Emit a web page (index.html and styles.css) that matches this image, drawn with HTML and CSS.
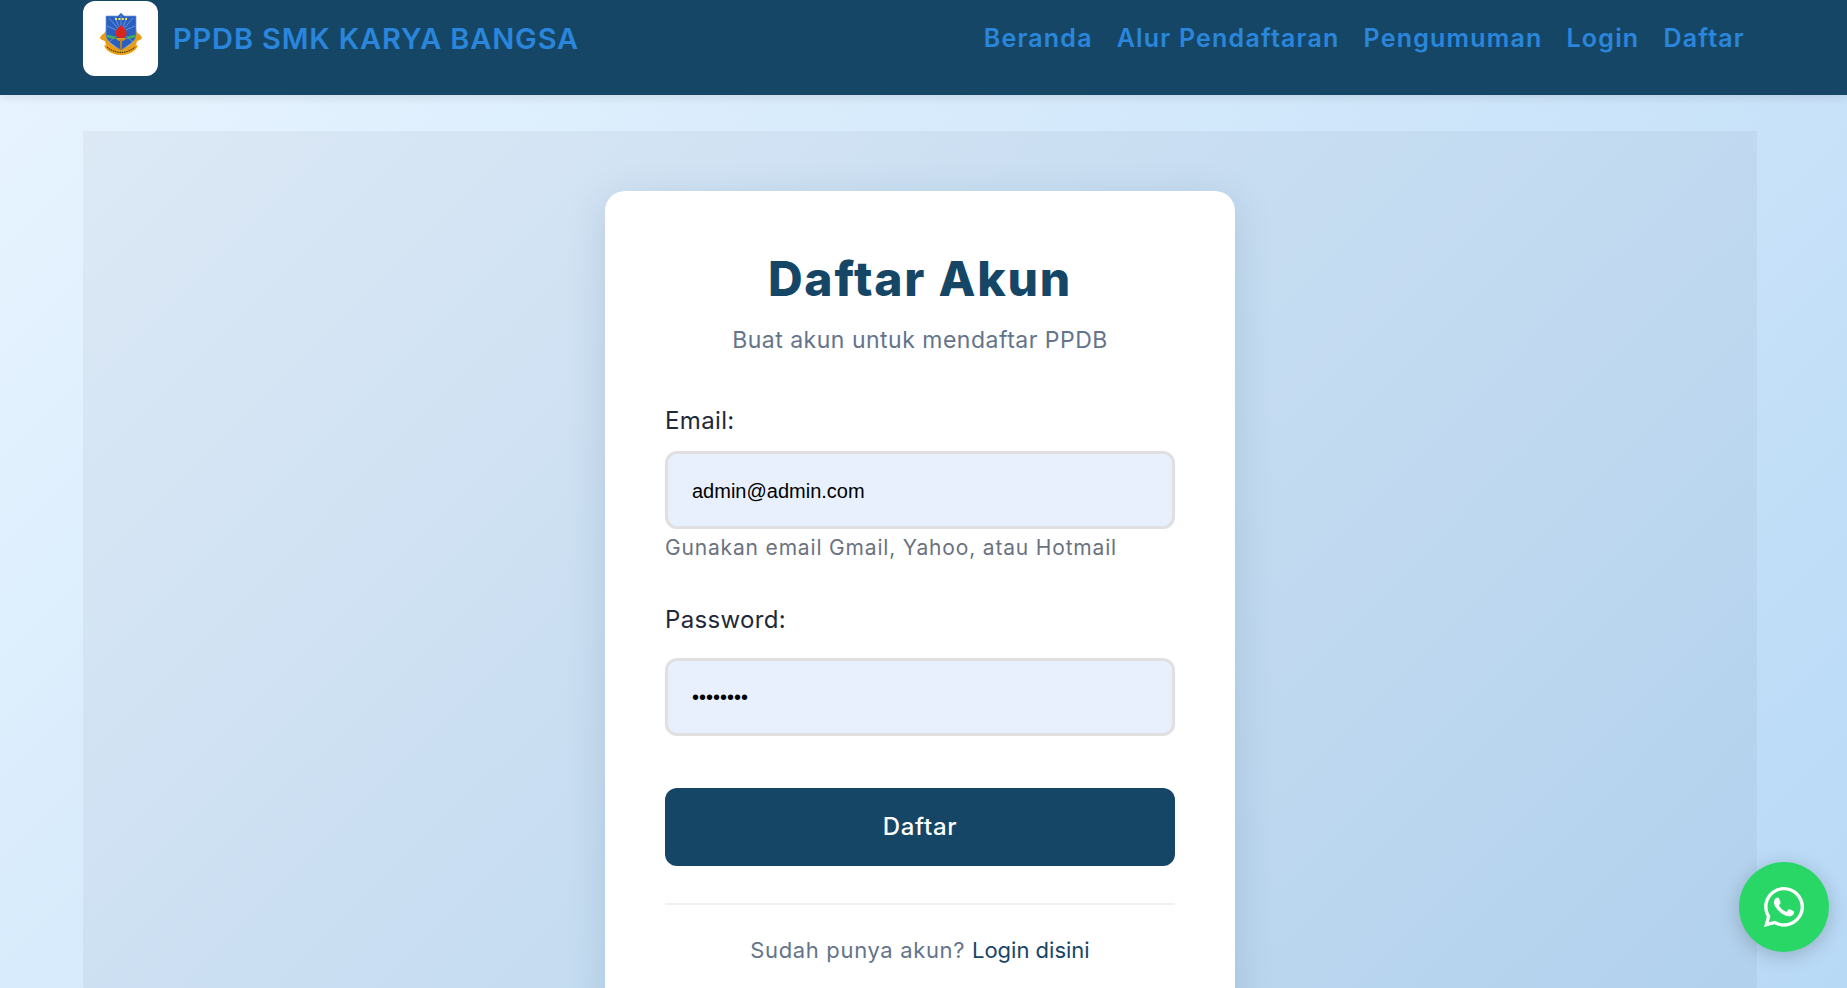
FILE: index.html
```html
<!DOCTYPE html>
<html lang="id">
<head>
<meta charset="utf-8">
<title>PPDB SMK Karya Bangsa</title>
<link rel="stylesheet" href="styles.css">
</head>
<body>
<header class="navbar">
  <div class="navbar-inner">
    <a class="brand" href="#">
      <span class="logo">
        <svg class="logo-art" viewBox="0 0 42 42" aria-hidden="true">
          <defs><filter id="soft" x="-5%" y="-5%" width="110%" height="110%"><feGaussianBlur stdDeviation=".35"/></filter></defs>
          <g filter="url(#soft)">
            <path d="M6 15c0 3-1 5-3 6-1 1-3 2-3 4 1 2 3 2 5 3 1 7 7 14 16 14s15-7 16-14c2-1 4-1 5-3 0-2-2-3-3-4-2-1-3-3-3-6-2 1-3 3-3 6v7c-2 4-7 7-12 7s-10-3-12-7v-7c0-3-1-5-3-6z" fill="#e89c12"/>
            <path d="M7 31c3 4 9 7 14 7s11-3 14-7l3 2c-3 6-10 9-17 9S7 39 4 33z" fill="#eda51a"/>
            <path d="M6 3h12l3-3 3 3h12v19c0 6-7 10-15 15C13 32 6 28 6 22z" fill="#2a5ec0" stroke="#6f9ae0" stroke-width=".7"/>
            <path d="M21 19 9 5M21 19 15 4M21 19 21 2M21 19 27 4M21 19 33 5M21 19 7 13M21 19 35 13M21 19 9 29M21 19 33 29" stroke="#7fabea" stroke-width=".7"/>
            <path d="M15 6h12" stroke="#f6ec5c" stroke-width="2.200" stroke-dasharray="2 1.400"/>
            <path d="M7 23l8 2M27 25l8-2" stroke="#44b24c" stroke-width="2.400"/>
            <path d="M15 25h12l-4 3h-4z" fill="#d99a1c"/>
            <path d="M21 12c3 3 5.500 5 5.500 8.500 0 3-2.500 4.500-5.500 4.500s-5.500-1.500-5.500-4.500c0-3.500 2.500-5.500 5.500-8.500z" fill="#d8261c"/>
            <path d="M20 27h2l-.4 10h-1.200z" fill="#d99a1c" stroke="#8a6410" stroke-width=".4"/>
            <path d="M7 34c3 3 9 5.500 14 5.500s11-2.500 14-5.500" fill="none" stroke="#4a3a10" stroke-width="1.300" stroke-dasharray="1.500 .8"/>
          </g>
        </svg>
      </span>
      <span class="brand-name">PPDB SMK KARYA BANGSA</span>
    </a>
    <nav class="nav-links">
      <a href="#">Beranda</a>
      <a href="#">Alur Pendaftaran</a>
      <a href="#">Pengumuman</a>
      <a href="#">Login</a>
      <a href="#">Daftar</a>
    </nav>
  </div>
</header>

<main class="panel">
  <section class="card">
    <h1 class="card-title">Daftar Akun</h1>
    <p class="card-subtitle">Buat akun untuk mendaftar PPDB</p>
    <form class="form">
      <div class="field">
        <label class="field-label" for="email">Email:</label>
        <input class="field-input" id="email" type="email" value="admin@admin.com">
        <small class="field-hint">Gunakan email Gmail, Yahoo, atau Hotmail</small>
      </div>
      <div class="field field-password">
        <label class="field-label" for="password">Password:</label>
        <input class="field-input" id="password" type="password" value="admin123">
      </div>
      <button class="submit" type="button">Daftar</button>
    </form>
    <p class="card-footer">Sudah punya akun? <a href="#">Login disini</a></p>
  </section>
</main>

<a class="whatsapp" href="#" aria-label="WhatsApp">
  <svg viewBox="0 0 448 512" aria-hidden="true"><path fill="currentColor" d="M380.900 97.100C339 55.100 283.200 32 223.900 32c-122.400 0-222 99.600-222 222 0 39.100 10.200 77.300 29.600 111L0 480l117.700-30.900c32.400 17.700 68.900 27 106.100 27h.1c122.300 0 224.100-99.600 224.100-222 0-59.300-25.200-115-67.100-157zm-157 341.600c-33.200 0-65.700-8.900-94-25.700l-6.700-4-69.800 18.300L72 359.200l-4.400-7c-18.500-29.400-28.200-63.300-28.200-98.200 0-101.700 82.800-184.500 184.600-184.500 49.300 0 95.600 19.200 130.400 54.100 34.800 34.900 56.200 81.200 56.100 130.500 0 101.800-84.900 184.600-186.600 184.600zm101.200-138.200c-5.500-2.800-32.800-16.200-37.900-18-5.100-1.900-8.800-2.800-12.500 2.800-3.700 5.600-14.300 18-17.600 21.800-3.200 3.700-6.500 4.200-12 1.400-32.600-16.300-54-29.100-75.500-66-5.700-9.800 5.700-9.100 16.300-30.300 1.800-3.700.9-6.900-.5-9.700-1.400-2.800-12.500-30.100-17.100-41.200-4.500-10.800-9.100-9.300-12.500-9.500-3.200-.2-6.900-.2-10.600-.2-3.700 0-9.700 1.400-14.800 6.900-5.100 5.600-19.400 19-19.400 46.300 0 27.300 19.900 53.700 22.600 57.400 2.800 3.700 39.100 59.700 94.800 83.800 35.200 15.200 49 16.500 66.600 13.900 10.700-1.600 32.800-13.400 37.400-26.400 4.600-13 4.600-24.100 3.200-26.400-1.300-2.500-5-3.900-10.500-6.600z"/></svg>
</a>
</body>
</html>
```
FILE: styles.css
```css
* { box-sizing: border-box; }

html, body { height: 988px; overflow: hidden; }

body {
  margin: 0;
  font-family: Inter, "Noto Sans", sans-serif;
  background: linear-gradient(135deg, #e9f5ff 0%, #b8d9f6 100%);
  color: #1e293b;
}

a { text-decoration: none; color: inherit; }

.navbar {
  height: 95px;
  background: #164666;
  box-shadow: 0 2px 10px rgba(0, 0, 0, .1);
  position: relative;
}

.navbar-inner {
  width: 1674px;
  margin-left: 83px;
  padding-top: 1px;
  display: flex;
  justify-content: space-between;
  align-items: center;
}

.brand { display: flex; align-items: center; gap: 15px; }

.logo {
  width: 75px;
  height: 75px;
  border-radius: 12px;
  background: #fff;
  display: flex;
  align-items: center;
  justify-content: center;
}

.logo-art { width: 42px; height: 42px; margin-bottom: 9px; }

.brand-name {
  font-size: 29px;
  font-weight: 600;
  letter-spacing: .85px;
  color: #2a86dc;
}

.nav-links { display: flex; padding-bottom: 2px; }

.nav-links a {
  padding: 0 12px;
  font-size: 25px;
  font-weight: 600;
  letter-spacing: 1.200px;
  color: #2a86dc;
}

.panel {
  width: 1674px;
  height: 857px;
  margin: 36px 0 0 83px;
  background: rgba(0, 10, 20, .04);
  display: flex;
  justify-content: center;
  padding-top: 60px;
}

.card {
  width: 630px;
  height: 860px;
  padding: 60px;
  background: #fff;
  border-radius: 20px;
  box-shadow: 0 10px 40px rgba(22, 70, 102, .15);
}

.card-title {
  margin: 0;
  height: 56px;
  line-height: 56px;
  font-size: 48px;
  font-weight: 800;
  letter-spacing: 1.800px;
  text-align: center;
  color: #164666;
}

.card-subtitle {
  margin: 17px 0 0;
  padding-top: 1px;
  line-height: 31px;
  font-size: 23px;
  letter-spacing: .5px;
  text-align: center;
  color: #64748b;
}

.form { margin-top: 48px; }

.field-label {
  display: block;
  padding-top: 1px;
  line-height: 31px;
  font-size: 24px;
  letter-spacing: .35px;
  color: #1e293b;
}

.field-input {
  display: block;
  width: 100%;
  height: 78px;
  margin-top: 15px;
  padding: 2px 24px 0;
  border: 3px solid #e0e0e0;
  border-radius: 12px;
  background: #e8f0fe;
  color: #000;
  font-family: "Liberation Sans", Arial, sans-serif;
  font-size: 20px;
  outline: none;
}

.field-hint {
  display: block;
  margin-top: 5px;
  line-height: 28px;
  font-size: 21px;
  letter-spacing: .83px;
  color: #6b7280;
}

.field-password { margin-top: 41px; }

.field-password .field-input { margin-top: 23px; padding-top: 0; }

.submit {
  display: block;
  width: 100%;
  height: 78px;
  margin-top: 52px;
  padding-bottom: 2px;
  border: 0;
  border-radius: 12px;
  background: #164666;
  color: #fff;
  font-family: inherit;
  font-size: 24px;
  font-weight: 500;
  letter-spacing: .7px;
}

.card-footer {
  margin: 37px 0 0;
  padding-top: 29px;
  border-top: 2px solid #eef0f3;
  line-height: 32px;
  font-size: 22px;
  letter-spacing: .65px;
  text-align: center;
  color: #64748b;
}

.card-footer a { color: #164666; letter-spacing: 0; }

.whatsapp {
  position: fixed;
  right: 18px;
  bottom: 36px;
  width: 90px;
  height: 90px;
  border-radius: 50%;
  background: #29d767;
  color: #fff;
  display: flex;
  align-items: center;
  justify-content: center;
  box-shadow: 0 4px 20px rgba(0, 0, 0, .2);
}

.whatsapp svg { width: 40px; height: 46px; }
```
